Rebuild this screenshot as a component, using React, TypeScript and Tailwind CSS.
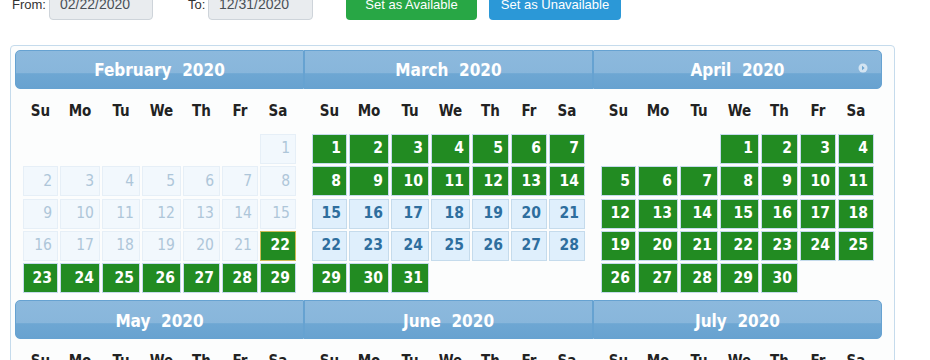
type Status = "disabled" | "today" | "green" | "open";

type Month = {
  name: string;
  start: number;
  days: number;
  status: (d: number) => Status;
};

const months: Month[] = [
  { name: "February", start: 6, days: 29, status: (d) => (d < 22 ? "disabled" : d === 22 ? "today" : "green") },
  { name: "March", start: 0, days: 31, status: (d) => (d <= 14 || d >= 29 ? "green" : "open") },
  { name: "April", start: 3, days: 30, status: () => "green" },
  { name: "May", start: 5, days: 31, status: () => "green" },
  { name: "June", start: 1, days: 30, status: () => "green" },
  { name: "July", start: 3, days: 31, status: () => "green" },
];

const dayNames = ["Su", "Mo", "Tu", "We", "Th", "Fr", "Sa"];

const cellStyles: Record<Status, string> = {
  disabled: "bg-[#f2f8fd] border-[#e6eff7] text-[#aec6d9] font-normal",
  today: "bg-[#228b22] border-[#cdbb56] text-white font-bold",
  green: "bg-[#228b22] border-[#c5dbec] text-white font-bold",
  open: "bg-[#dfeffc] border-[#c5dbec] text-[#2e6e9e] font-bold",
};

const cols = "grid grid-cols-[35px_40px_38px_39px_37px_36px_36px] gap-x-[2px]";

function MonthBlock({ month, pos }: { month: Month; pos: number }) {
  const cells = [];
  for (let i = 0; i < 35; i++) {
    const d = i - month.start + 1;
    if (d < 1 || d > month.days) {
      cells.push(<div key={i} className="h-[30px]" />);
    } else {
      const s = month.status(d);
      cells.push(
        <div
          key={i}
          className={`flex h-[30px] items-center justify-end border pr-[5px] text-[15.5px] ${cellStyles[s]}`}
        >
          {d}
        </div>
      );
    }
  }

  const corner = pos === 0 ? "rounded-l-[5px]" : pos === 2 ? "rounded-r-[5px]" : "";

  return (
    <div className="w-[289px] pb-[7px]">
      <div
        className={`relative flex h-[39px] items-center justify-center border border-[#66a2d1] bg-[linear-gradient(to_bottom,#8cb9dd_0%,#88b6db_60%,#6ea7d3_61%,#68a2d0_100%)] pt-[3px] text-[17px] font-bold text-white ${corner}`}
      >
        <span className="whitespace-pre">{month.name}  2020</span>
        {pos === 2 && month.name === "April" && (
          <svg className="absolute right-[13px] top-[12px]" width="10" height="10" viewBox="0 0 10 10">
            <circle cx="5" cy="5" r="4.5" fill="#d3e4f2" />
            <path d="M4 2.8 L6.6 5 L4 7.2 Z" fill="#6fa7d3" />
          </svg>
        )}
      </div>
      <div className="px-[8px]">
        <div className={`${cols} h-[44px] items-center text-center text-[15px] font-bold text-[#222]`}>
          {dayNames.map((n) => (
            <span key={n}>{n}</span>
          ))}
        </div>
        <div className={`${cols} mt-[1px] gap-y-[2.33px]`}>{cells}</div>
      </div>
    </div>
  );
}

export default function App() {
  return (
    <div className="h-[360px] w-[930px] overflow-hidden bg-white">
      <div className="-mt-[11px] flex h-[31px] items-center font-['Liberation_Sans',Arial,sans-serif]">
        <span className="ml-[12px] w-[37px] text-[13px] text-[#333]">From:</span>
        <div className="flex h-full w-[104px] items-center rounded-[4px] border border-[#ced4da] bg-[#e9ecef] pl-[10px] text-[14px] text-[#495057]">
          02/22/2020
        </div>
        <span className="ml-[35px] w-[20px] text-[13px] text-[#333]">To:</span>
        <div className="flex h-full w-[105px] items-center rounded-[4px] border border-[#ced4da] bg-[#e9ecef] pl-[10px] text-[14px] text-[#495057]">
          12/31/2020
        </div>
        <button className="ml-[33px] h-full w-[131px] rounded-[4px] bg-[#28a745] pt-[1px] text-center text-[13px] text-white">
          Set as Available
        </button>
        <button className="ml-[12px] h-full w-[132px] rounded-[4px] bg-[#2b98d7] pt-[1px] text-center text-[13px] text-white">
          Set as Unavailable
        </button>
      </div>

      <div className="ml-[10px] mt-[25px] w-[885px] rounded-[4px] border border-[#c5dbec] bg-[#fcfdfd] pl-[4px] pt-[4px] font-['DejaVu_Sans_Condensed','DejaVu_Sans',sans-serif]">
        <div className="flex">
          {months.slice(0, 3).map((m, i) => (
            <MonthBlock key={m.name} month={m} pos={i} />
          ))}
        </div>
        <div className="flex">
          {months.slice(3).map((m, i) => (
            <MonthBlock key={m.name} month={m} pos={i} />
          ))}
        </div>
      </div>
    </div>
  );
}
